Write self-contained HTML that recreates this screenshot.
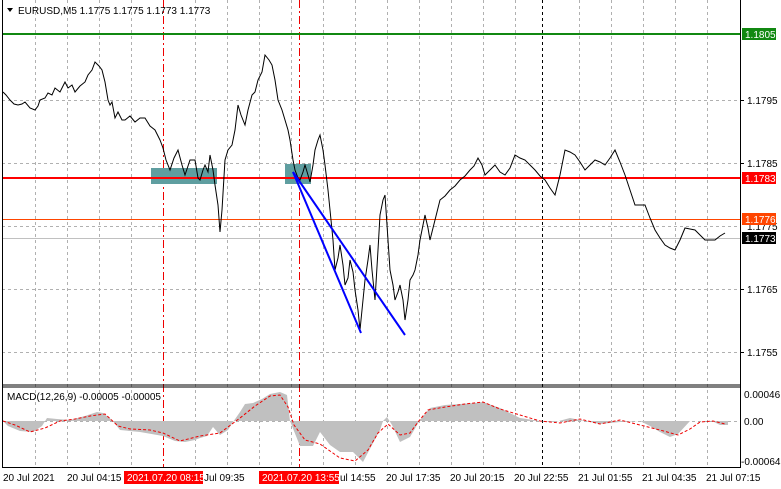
<!DOCTYPE html>
<html><head><style>
html,body{margin:0;padding:0;background:#fff;}
body{width:781px;height:489px;overflow:hidden;position:relative;font-family:"Liberation Sans",sans-serif;}
svg{position:absolute;left:0;top:0;}
</style></head><body>
<svg width="781" height="489" viewBox="0 0 781 489" font-family="Liberation Sans, sans-serif" font-size="10">
<g stroke="#b0b0b0" stroke-dasharray="3,3" stroke-width="1">
<line x1="35.5" y1="0" x2="35.5" y2="467"/><line x1="67.5" y1="0" x2="67.5" y2="467"/><line x1="99.5" y1="0" x2="99.5" y2="467"/><line x1="131.5" y1="0" x2="131.5" y2="467"/><line x1="195.5" y1="0" x2="195.5" y2="467"/><line x1="227.5" y1="0" x2="227.5" y2="467"/><line x1="259.5" y1="0" x2="259.5" y2="467"/><line x1="291.5" y1="0" x2="291.5" y2="467"/><line x1="323.5" y1="0" x2="323.5" y2="467"/><line x1="355.5" y1="0" x2="355.5" y2="467"/><line x1="387.5" y1="0" x2="387.5" y2="467"/><line x1="419.5" y1="0" x2="419.5" y2="467"/><line x1="451.5" y1="0" x2="451.5" y2="467"/><line x1="483.5" y1="0" x2="483.5" y2="467"/><line x1="515.5" y1="0" x2="515.5" y2="467"/><line x1="579.5" y1="0" x2="579.5" y2="467"/><line x1="611.5" y1="0" x2="611.5" y2="467"/><line x1="643.5" y1="0" x2="643.5" y2="467"/><line x1="675.5" y1="0" x2="675.5" y2="467"/><line x1="707.5" y1="0" x2="707.5" y2="467"/>
<line x1="2" y1="100.5" x2="740" y2="100.5"/><line x1="2" y1="163.5" x2="740" y2="163.5"/><line x1="2" y1="226.5" x2="740" y2="226.5"/><line x1="2" y1="289.5" x2="740" y2="289.5"/><line x1="2" y1="352.5" x2="740" y2="352.5"/>
<line x1="2" y1="421.5" x2="740" y2="421.5"/>
</g>
<g stroke="#e00" stroke-dasharray="8,3,2,3" stroke-width="1"><line x1="163.5" y1="0" x2="163.5" y2="467"/><line x1="299.5" y1="0" x2="299.5" y2="467"/></g>
<line x1="542.5" y1="0" x2="542.5" y2="467" stroke="#000" stroke-dasharray="3,3"/>
<line x1="2" y1="34" x2="740" y2="34" stroke="#118811" stroke-width="2"/>
<line x1="2" y1="219.5" x2="740" y2="219.5" stroke="#ff4500" stroke-width="1"/>
<line x1="2" y1="238.5" x2="740" y2="238.5" stroke="#c0c0c0" stroke-width="1"/>
<rect x="151" y="168" width="66" height="16" fill="#5f9ea0"/>
<rect x="285" y="164" width="26" height="20" fill="#5f9ea0"/>
<line x1="2" y1="178" x2="740" y2="178" stroke="#f00" stroke-width="2"/>
<polyline fill="none" stroke="#000" stroke-width="1" points="3,92 6,95 10,100 14,104 18,105 22,104 25,102 30,108 35,110 38,106 40,100 45,98 48,93 52,95 55,88 60,92 65,82 68,88 72,85 75,92 80,86 85,82 88,75 92,70 95,62 99,66 102,70 105,82 108,100 110,105 112,102 115,118 118,112 122,120 125,120 130,116 135,122 140,118 145,118 150,126 155,130 160,140 163,148 166,160 170,170 174,158 178,150 182,165 185,175 190,160 195,160 198,178 200,180 203,170 205,165 208,172 210,155 213,170 215,185 218,205 220,232 222,210 225,160 228,150 232,145 235,130 238,105 241,115 245,125 248,110 252,95 255,92 258,80 262,72 265,55 269,60 272,65 275,80 278,100 282,110 285,120 288,130 290,140 293,160 295,170 298,178 300,180 303,172 305,165 308,175 310,182 313,165 315,150 318,140 320,135 323,150 325,165 328,190 330,210 333,240 335,270 338,258 340,245 343,265 345,285 348,278 350,260 353,272 355,290 358,310 360,330 363,300 365,280 368,260 370,245 372,270 375,300 378,250 380,215 383,200 385,195 388,240 390,270 393,285 395,300 398,292 400,285 403,300 405,320 408,300 410,280 413,275 415,270 418,255 420,240 423,225 425,215 428,228 430,240 433,228 435,220 438,208 440,200 445,196 450,190 455,186 460,180 465,176 470,170 474,166 478,158 482,165 485,175 490,170 495,165 500,172 505,175 510,168 515,155 520,158 525,160 530,165 535,170 540,176 545,180 550,188 555,195 560,175 565,150 570,152 575,155 580,162 585,170 590,165 595,160 600,162 605,165 610,158 615,150 620,162 625,175 630,190 635,205 640,205 645,205 650,218 655,230 660,238 665,245 670,248 675,250 680,240 685,228 690,229 695,230 700,235 705,240 710,240 715,240 720,236 725,233"/>
<g stroke="#0000ff" stroke-width="2"><line x1="293" y1="172" x2="361" y2="333"/><line x1="293" y1="172" x2="405" y2="335"/></g>
<line x1="2" y1="385" x2="740" y2="385" stroke="#000"/>
<line x1="2" y1="387" x2="740" y2="387" stroke="#000"/>
<path d="M3,421 L8,426 L20,431 L33,432 L42,426 L47,418 L57,419 L70,420 L85,416 L97,412 L103,413 L112,420 L120,430 L140,432 L163,436 L175,441 L185,442 L195,440 L200,438 L207,436 L213,427 L220,435 L228,430 L233,422 L240,412 L245,404 L253,403 L262,399 L270,394 L280,392 L287,395 L290,421 L300,446 L313,446 L320,432 L330,445 L340,452 L353,452 L363,462 L372,445 L380,430 L383,421 L387,417 L392,425 L400,442 L410,437 L420,420 L430,408 L445,405 L460,404 L475,403 L483,402 L500,408 L520,418 L540,421 L555,422 L570,418 L585,421 L600,424 L620,422 L640,421 L650,426 L660,432 L670,437 L678,434 L690,421 L700,421 L712,421 L720,425 L728,425 L728,421 Z" fill="#c0c0c0"/>
<polyline fill="none" stroke="#e00" stroke-dasharray="3,2" points="3,421 15,425 30,432 45,428 60,421 75,419 90,416 105,414 118,426 130,429 150,430 163,433 180,441 200,436 220,433 240,418 255,406 270,396 280,395 288,407 294,425 305,440 320,444 340,458 355,461 368,450 378,433 388,424 400,435 410,433 418,422 428,410 445,407 465,404 483,402 500,409 520,415 540,421 560,423 580,419 600,424 620,420 640,425 660,430 678,435 690,429 700,422 713,421 725,424"/>
<line x1="740.5" y1="0" x2="740.5" y2="467" stroke="#000"/>
<line x1="2.5" y1="0" x2="2.5" y2="467" stroke="#000"/>
<line x1="2" y1="467.5" x2="741" y2="467.5" stroke="#000"/>
<g fill="#000"><path d="M7,8 L13,8 L10,12 Z"/></g>
<text x="18" y="14" fill="#000">EURUSD,M5  1.1775 1.1775 1.1773 1.1773</text>
<text x="7" y="400" fill="#000">MACD(12,26,9) -0.00005 -0.00005</text>
<g fill="#000"><line x1="740" y1="100.5" x2="744" y2="100.5" stroke="#000"/><line x1="740" y1="163.5" x2="744" y2="163.5" stroke="#000"/><line x1="740" y1="289.5" x2="744" y2="289.5" stroke="#000"/><line x1="740" y1="352.5" x2="744" y2="352.5" stroke="#000"/>
<text x="747" y="104">1.1795</text><text x="747" y="167">1.1785</text><text x="747" y="230">1.1775</text><text x="747" y="293">1.1765</text><text x="747" y="356">1.1755</text>
<text x="744" y="398">0.00046</text><text x="744" y="425">0.00</text><text x="741" y="465">-0.00064</text></g>
<rect x="742" y="28" width="34" height="12" fill="#118811"/><text x="745" y="38" fill="#fff">1.1805</text>
<rect x="742" y="172" width="34" height="12" fill="#f00"/><text x="745" y="182" fill="#fff">1.1783</text>
<rect x="742" y="213" width="34" height="12" fill="#ff4500"/><text x="745" y="223" fill="#fff">1.1776</text>
<rect x="742" y="232" width="34" height="12" fill="#000"/><text x="745" y="242" fill="#fff">1.1773</text>
<g fill="#000"><text x="3" y="481">20 Jul 2021</text><text x="67" y="481">20 Jul 04:15</text><text x="204" y="481">Jul 09:35</text><text x="340" y="481">ul 14:55</text><text x="386" y="481">20 Jul 17:35</text><text x="450" y="481">20 Jul 20:15</text><text x="514" y="481">20 Jul 22:55</text><text x="578" y="481">21 Jul 01:55</text><text x="642" y="481">21 Jul 04:35</text><text x="706" y="481">21 Jul 07:15</text></g>
<rect x="124" y="471" width="79" height="13" fill="#f00"/><text x="127" y="481" fill="#fff">2021.07.20 08:15</text>
<rect x="259" y="471" width="80" height="13" fill="#f00"/><text x="262" y="481" fill="#fff">2021.07.20 13:55</text>
</svg>
</body></html>
